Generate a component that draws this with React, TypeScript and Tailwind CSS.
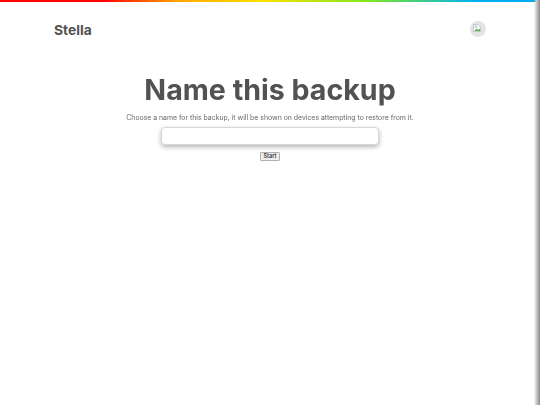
export default function App() {
  return (
    <div
      className="relative h-[405px] w-[540px] overflow-hidden bg-white text-[#505050]"
      style={{ fontFamily: "Inter, sans-serif" }}
    >
      {/* Rainbow bar */}
      <div className="h-[2px] bg-[linear-gradient(90deg,#ff0000_0%,#ff0000_19%,#ffa500_33%,#ffe000_48%,#80e820_68%,#00b0f0_88%,#00a8f0_100%)]" />

      {/* Header */}
      <div className="flex h-[56px] items-center justify-between pl-[54px] pr-[54px] opacity-[0.99]">
        <span className="mt-[2px] text-[13.8px] leading-none font-bold">Stella</span>
        <div className="mb-[2px] flex h-[16px] w-[16px] items-start justify-center rounded-full bg-[#e4e4e4] pt-[3px] pr-[3px]">
          <BrokenImage />
        </div>
      </div>

      {/* Main */}
      <div className="flex flex-col items-center pt-[12px] opacity-[0.99]">
        <h1 className="text-[28.6px] leading-[39px] font-bold">Name this backup</h1>
        <p className="mt-[4px] text-[6.9px] leading-[10px] text-[#666666]">
          Choose a name for this backup, it will be shown on devices attempting to restore from it.
        </p>
        <input
          type="text"
          className="mt-[4px] h-[18px] w-[218px] rounded-[4px] border border-[#d8d8d8] bg-white shadow-[0_2px_5px_rgba(0,0,0,0.3)] outline-none"
        />
        <button className="mt-[7px] flex h-[9px] w-[20px] items-center justify-center rounded-[1px] border border-[#b0b0b0] bg-[#efefef] text-[5.5px] leading-none font-semibold text-[#333333]">
          Start
        </button>
      </div>

      {/* Right edge shadow */}
      <div className="absolute top-0 right-0 bottom-0 w-[6px] bg-[linear-gradient(90deg,rgba(255,255,255,0)_0%,#d0d0d0_35%,#8c8c8c_100%)]" />
    </div>
  );
}

function BrokenImage() {
  return (
    <svg width="8" height="8" viewBox="0 0 16 16">
      <path d="M1 1h9l5 5v9H1z" fill="#fff" stroke="#9a9a9a" />
      <path d="M3 3h6v5H3z" fill="#c3d4f0" />
      <path d="M3 14l4-5 3 3 4-3v5z" fill="#4caf50" />
    </svg>
  );
}
